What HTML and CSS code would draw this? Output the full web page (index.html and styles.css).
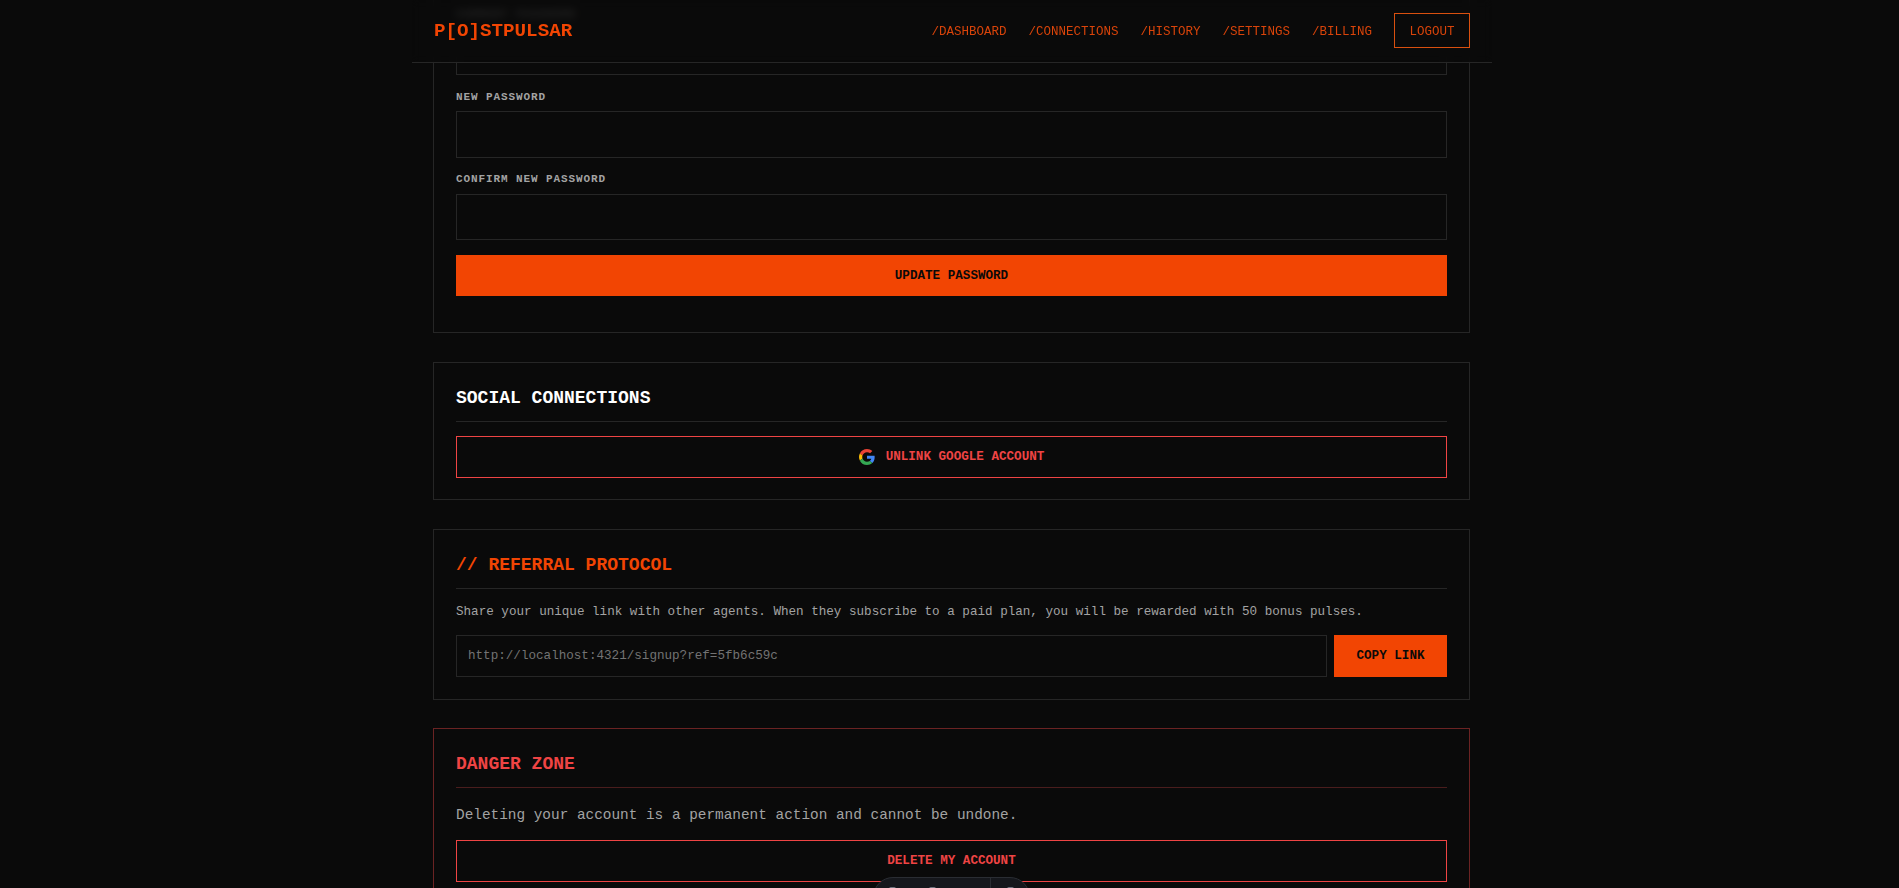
FILE: index.html
```html
<!DOCTYPE html>
<html lang="en">
<head>
<meta charset="utf-8">
<title>PostPulsar Settings</title>
<link rel="stylesheet" href="styles.css">
</head>
<body>
<header class="topbar">
  <a class="logo">P[O]STPULSAR</a>
  <nav class="nav">
    <a class="nav-link">/DASHBOARD</a>
    <a class="nav-link">/CONNECTIONS</a>
    <a class="nav-link">/HISTORY</a>
    <a class="nav-link">/SETTINGS</a>
    <a class="nav-link">/BILLING</a>
    <a class="logout">LOGOUT</a>
  </nav>
</header>
<main class="main">
  <section class="card card-password">
    <div class="field">
      <label class="label">CURRENT PASSWORD</label>
      <div class="input"></div>
    </div>
    <div class="field">
      <label class="label">NEW PASSWORD</label>
      <div class="input"></div>
    </div>
    <div class="field field-confirm">
      <label class="label">CONFIRM NEW PASSWORD</label>
      <div class="input"></div>
    </div>
    <button class="btn btn-primary btn-update">UPDATE PASSWORD</button>
  </section>
  <section class="card card-social">
    <h2 class="title">SOCIAL CONNECTIONS</h2>
    <button class="btn btn-danger">
      <svg class="g" viewBox="0 0 48 48" width="16" height="16"><path fill="#EA4335" d="M24 9.500c3.500 0 6.700 1.200 9.200 3.600l6.900-6.900C35.900 2.400 30.500 0 24 0 14.600 0 6.500 5.400 2.600 13.200l8 6.200C12.500 13.600 17.800 9.500 24 9.500z"/><path fill="#4285F4" d="M47 24.500c0-1.600-.1-3.100-.4-4.500H24v9h12.900c-.6 3-2.200 5.500-4.700 7.200l7.700 6c4.500-4.200 7.100-10.300 7.100-17.700z"/><path fill="#FBBC05" d="M10.500 28.600c-.5-1.400-.8-3-.8-4.600s.3-3.200.8-4.600l-8-6.200C.9 16.500 0 20.100 0 24s.9 7.500 2.600 10.800l7.900-6.200z"/><path fill="#34A853" d="M24 48c6.500 0 11.900-2.100 15.900-5.800l-7.700-6c-2.100 1.400-4.900 2.300-8.200 2.300-6.200 0-11.500-4.200-13.400-9.800l-8 6.200C6.500 42.600 14.600 48 24 48z"/></svg>
      UNLINK GOOGLE ACCOUNT
    </button>
  </section>
  <section class="card">
    <h2 class="title title-accent">// REFERRAL PROTOCOL</h2>
    <p class="share">Share your unique link with other agents. When they subscribe to a paid plan, you will be rewarded with 50 bonus pulses.</p>
    <div class="ref-row">
      <div class="ref-input">http://localhost:4321/signup?ref=5fb6c59c</div>
      <button class="btn btn-primary btn-copy">COPY LINK</button>
    </div>
  </section>
  <section class="card card-danger">
    <h2 class="title title-danger">DANGER ZONE</h2>
    <p class="warn">Deleting your account is a permanent action and cannot be undone.</p>
    <button class="btn btn-danger">DELETE MY ACCOUNT</button>
  </section>
</main>
<div class="devbar">
  <span class="devbar-a"><i class="dot"></i><i class="dot"></i></span>
  <span class="devbar-b"><i class="dot"></i></span>
</div>
</body>
</html>
```
FILE: styles.css
```css
* { box-sizing: border-box; }
html, body { margin: 0; height: 888px; overflow: hidden; }
body { background: #0a0a0a; font-family: "Liberation Mono", monospace; color: #a3a3a3; position: relative; }
.topbar { position: absolute; top: 0; left: 412px; width: 1080px; height: 63px; padding: 0 22px; display: flex; align-items: center; justify-content: space-between; background: rgba(10,10,10,.8); backdrop-filter: blur(4px); border-bottom: 1px solid #262626; z-index: 2; }
.logo { color: #f24503; font-weight: 700; font-size: 19.200px; }
.nav { display: flex; align-items: center; gap: 22px; padding-bottom: 1px; font-size: 12.500px; color: #d9440a; }
.nav-link { padding-top: 2px; }
.logout { border: 1px solid #d9500f; padding: 2px 14.500px 0; height: 35px; display: flex; align-items: center; }
.main { width: 1037px; margin: -112px 0 0 433px; display: flex; flex-direction: column; gap: 28.800px; }
.card { border: 1px solid #262626; padding: 22px; background: #0a0a0a; }
.card-password { padding-top: 119px; padding-bottom: 36.200px; }
.card-social { padding-bottom: 21.200px; margin-bottom: .8px; }
.field + .field { margin-top: 16px; }
.field-confirm + .btn { margin-top: 14.600px; }
.field + .field-confirm { margin-top: 15px; }
.label { display: block; height: 12px; line-height: 12px; font-size: 11px; font-weight: 700; letter-spacing: .9px; color: #a3a3a3; margin-bottom: 8px; }
.field-confirm .label { margin-bottom: 9px; }
.input { height: 47px; border: 1px solid #262626; }
.field-confirm .input { height: 46.400px; }
.btn { display: flex; align-items: center; justify-content: center; gap: 11px; width: 100%; height: 41.600px; font-family: inherit; font-weight: 700; font-size: 12.600px; border: 0; }
.btn-update { height: 41px; padding-top: 2px; }
.btn-primary { background: #f24503; color: #0a0a0a; }
.btn-danger { background: transparent; border: 1px solid #ef4444; color: #ef4444; }
.title { margin: 0 0 14px; padding: 1px 0 11px; border-bottom: 1px solid #262626; font-size: 18px; line-height: 24px; color: #fff; }
.title-accent { color: #f24503; }
.title-danger { color: #ef4444; border-color: #4a1d1d; }
.share { margin: 15.200px 0 16.400px; font-size: 12.600px; line-height: 14px; }
.ref-row { display: flex; gap: 7px; }
.ref-input { flex: 1; height: 41.600px; display: flex; align-items: center; padding: 0 11px; border: 1px solid #262626; font-size: 12.600px; color: #737373; }
.btn-copy { width: 113px; }
.card-danger { border-color: #6b2323; }
.warn { margin: 18.800px 0 16.800px; font-size: 14.400px; line-height: 16px; }
.devbar { position: absolute; left: 873px; top: 877px; width: 157px; height: 40px; display: flex; border: 1px solid #2a2d33; border-radius: 20px; background: #15171c; z-index: 3; }
.devbar-a { width: 117px; padding: 9px 0 0 15px; display: flex; gap: 33px; border-right: 1px solid #2a2d33; }
.devbar-b { flex: 1; padding: 9px 0 0 16px; display: flex; }
.dot { width: 7px; height: 8px; border-radius: 2px; background: #6f7480; }
```
